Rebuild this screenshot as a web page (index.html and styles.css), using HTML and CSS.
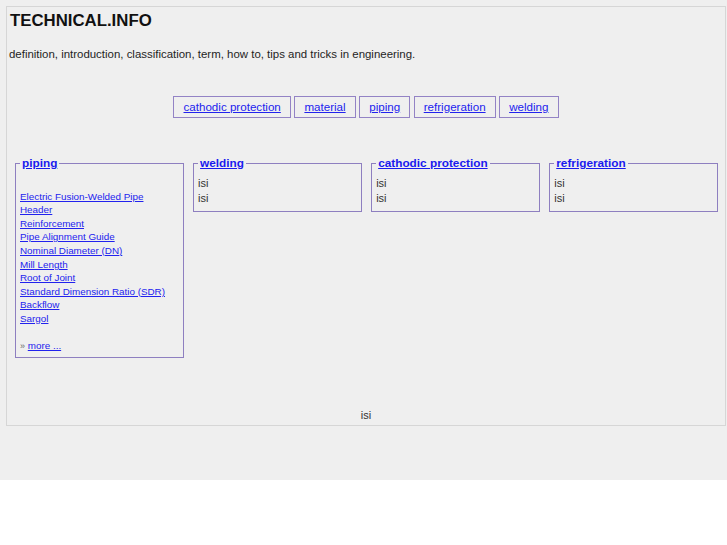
FILE: index.html
```html
<!DOCTYPE html>
<html>
<head>
<meta charset="utf-8">
<title>TECHNICAL.INFO</title>
<link rel="stylesheet" href="styles.css">
</head>
<body>
<div class="page">
  <div class="box">
    <h1 class="title">TECHNICAL.INFO</h1>
    <p class="tagline">definition, introduction, classification, term, how to, tips and tricks in engineering.</p>
    <nav class="nav">
      <a href="#">cathodic protection</a>
      <a href="#">material</a>
      <a href="#">piping</a>
      <a href="#">refrigeration</a>
      <a href="#">welding</a>
    </nav>
    <div class="cats">
      <fieldset class="cat cat-links">
        <legend><a href="#">piping</a></legend>
        <div class="links">
          <div class="blank"></div>
          <a href="#">Electric Fusion-Welded Pipe</a>
          <a href="#">Header</a>
          <a href="#">Reinforcement</a>
          <a href="#">Pipe Alignment Guide</a>
          <a href="#">Nominal Diameter (DN)</a>
          <a href="#">Mill Length</a>
          <a href="#">Root of Joint</a>
          <a href="#">Standard Dimension Ratio (SDR)</a>
          <a href="#">Backflow</a>
          <a href="#">Sargol</a>
          <div class="blank"></div>
          <div class="more"><span class="raquo">»</span> <a href="#">more ...</a></div>
        </div>
      </fieldset>
      <fieldset class="cat">
        <legend><a href="#">welding</a></legend>
        <div class="plain">isi<br>isi</div>
      </fieldset>
      <fieldset class="cat">
        <legend><a href="#">cathodic protection</a></legend>
        <div class="plain">isi<br>isi</div>
      </fieldset>
      <fieldset class="cat">
        <legend><a href="#">refrigeration</a></legend>
        <div class="plain">isi<br>isi</div>
      </fieldset>
    </div>
    <div class="footer">isi</div>
  </div>
</div>
</body>
</html>
```
FILE: styles.css
```css
html, body {
  margin: 0;
  padding: 0;
  background: #ffffff;
}
body {
  font-family: "Liberation Sans", Arial, sans-serif;
  color: #222;
}
.page {
  background: #efefef;
  padding: 6px 1px 54px 6px;
}
.box {
  border: 1px solid #d6d6d6;
  background: #efefef;
}
.title {
  margin: 0;
  padding: 4px 3px 0 3px;
  font-size: 16.8px;
  line-height: 20px;
  font-weight: bold;
  color: #111;
}
.tagline {
  margin: 16px 0 0 2px;
  font-size: 11.45px;
  line-height: 14px;
  color: #1e1e1e;
}
.nav {
  display: flex;
  justify-content: center;
  gap: 3.2px;
  margin-top: 35px;
}
.nav a {
  display: inline-block;
  border: 1px solid #9383c5;
  padding: 0 9.2px;
  font-size: 11.6px;
  line-height: 20px;
  color: #2222ee;
}
.cats {
  display: grid;
  grid-template-columns: repeat(4, 1fr);
  column-gap: 9.33px;
  align-items: start;
  padding: 0 7px 0 8px;
  margin-top: 38px;
}
.cat {
  margin: 0;
  border: 1px solid #8e7fc0;
  padding: 6px 4px 5px 4px;
  min-width: 0;
}
.cat-links {
  padding-bottom: 3px;
}
.cat legend {
  padding: 0 2px;
  font-size: 11.8px;
  line-height: 14px;
  font-weight: bold;
}
.cat legend a {
  color: #1a1aee;
}
.plain {
  font-size: 11px;
  line-height: 15px;
  color: #333;
}
.links {
  font-size: 9.85px;
  line-height: 13.6px;
}
.links a {
  display: block;
  color: #2222ee;
  width: max-content;
}
.blank {
  height: 13.6px;
}
.more a {
  display: inline;
}
.raquo {
  color: #666;
  font-size: 9px;
}
.footer {
  text-align: center;
  font-size: 11px;
  line-height: 15px;
  color: #333;
  margin-top: 50px;
  padding-bottom: 2px;
}
```
